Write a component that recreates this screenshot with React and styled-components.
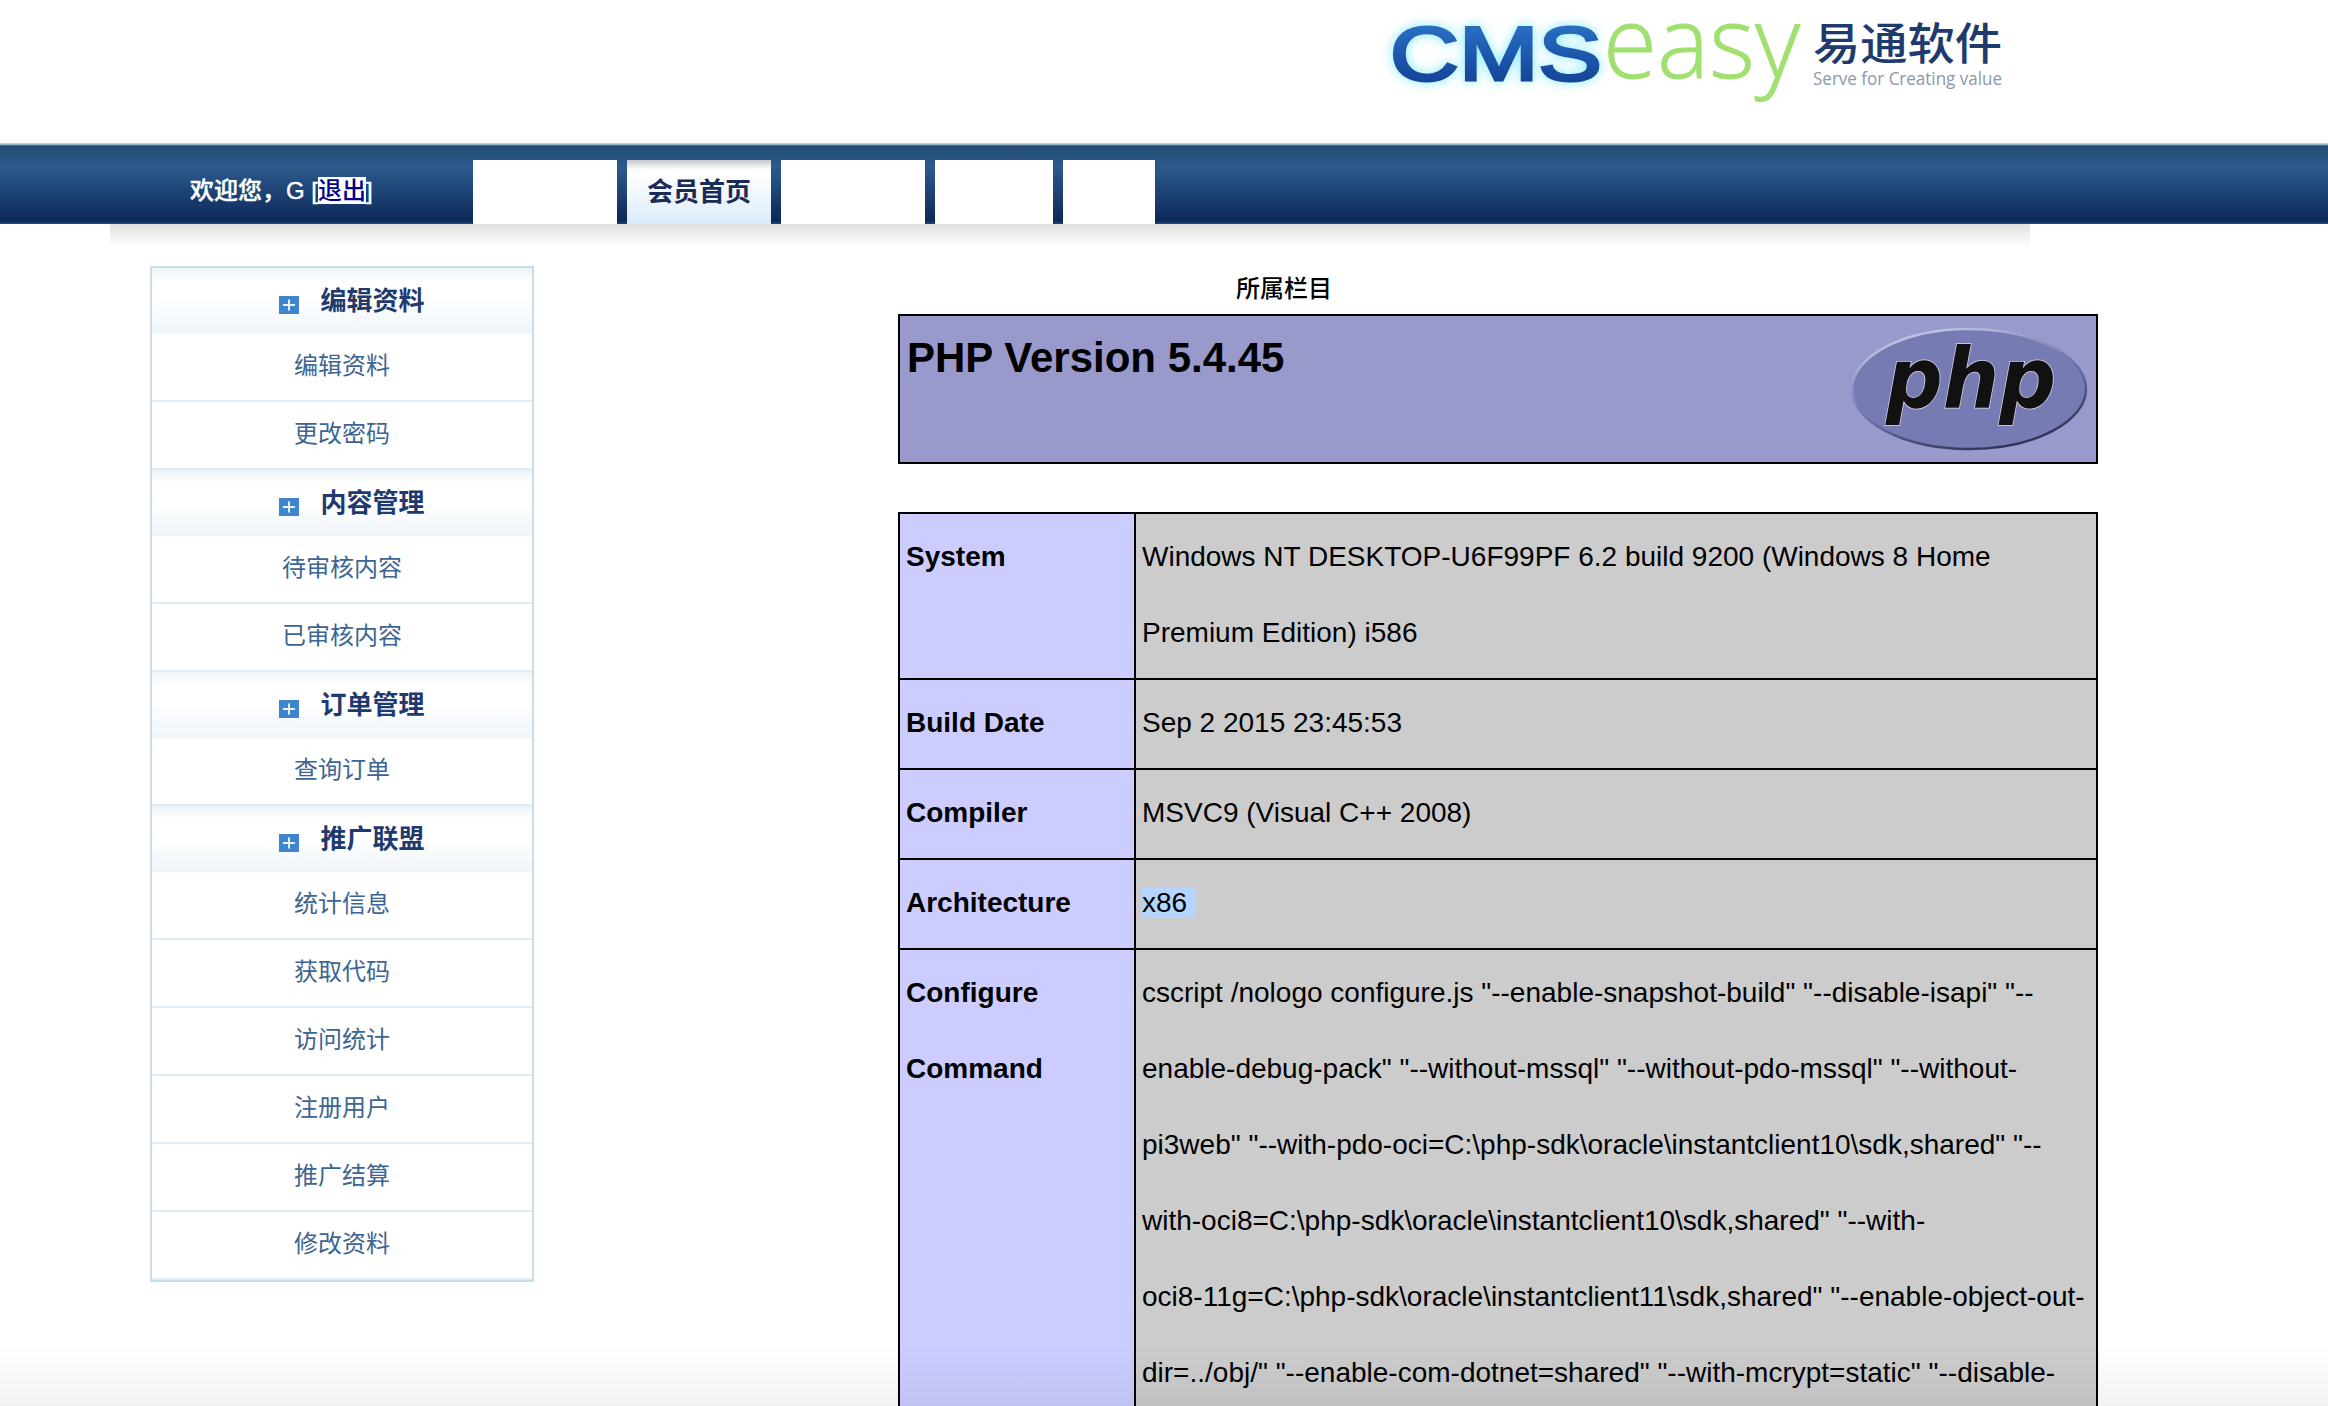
import React from "react";
import styled, { createGlobalStyle } from "styled-components";

const GlobalStyle = createGlobalStyle`
  html, body {
    margin: 0;
    padding: 0;
    height: 1406px;
    overflow: hidden;
    background: #fff;
  }
  * { box-sizing: border-box; }
`;

const Page = styled.div`
  position: relative;
  height: 1406px;
  overflow: hidden;
  font-family: "Liberation Sans", "Noto Sans CJK SC", sans-serif;
`;

const FadeOverlay = styled.div`
  position: absolute;
  left: 0;
  right: 0;
  bottom: 0;
  height: 62px;
  pointer-events: none;
  background: linear-gradient(rgba(0, 0, 0, 0), rgba(0, 0, 0, 0.05));
`;

const Header = styled.header`
  height: 143px;
  padding-left: 1380px;
`;

const Nav = styled.nav`
  display: flex;
  height: 81px;
  padding-left: 190px;
  background: linear-gradient(#b8d2e2 0, #b8d2e2 1px, #234b74 3px, #2c5a8c 24px, #0c2859 78px, #1c4c82 81px);
`;

const Welcome = styled.div`
  width: 283px;
  padding-top: 31px;
  font-size: 24px;
  line-height: 34px;
  font-weight: 500;
  color: #fff;
  white-space: nowrap;
  -webkit-text-stroke: 0.4px #fff;
`;

const Logout = styled.a`
  background: #fff;
  color: #00008b;
  -webkit-text-stroke: 0;
`;

const Tabs = styled.div`
  display: flex;
  align-items: flex-end;
  gap: 10px;
`;

const Tab = styled.div`
  display: flex;
  align-items: center;
  justify-content: center;
  width: ${(props) => props.w}px;
  height: 64px;
  padding-bottom: 6px;
  font-size: 26px;
  font-weight: 700;
  color: #1a2c55;
  background: ${(props) =>
    props.active ? "linear-gradient(#c9c9c9 0, #f8fbfe 9px, #ffffff 14px, #dbebfb 100%)" : "#fff"};
`;

const ShadowBand = styled.div`
  height: 23px;
  margin: 0 298px 0 110px;
  background: linear-gradient(#e0e0e0, #fff);
`;

const Main = styled.main`
  display: flex;
  align-items: flex-start;
  gap: 364px;
  padding: 19px 0 0 150px;
`;

const Sidebar = styled.aside`
  flex: none;
  width: 384px;
  border: 2px solid #c9dde8;
`;

const SectionHead = styled.div`
  display: flex;
  align-items: center;
  justify-content: center;
  gap: 21px;
  height: 66px;
  padding: 0 0 6px 20px;
  font-size: 26px;
  font-weight: 700;
  color: #1f3a6e;
  background: linear-gradient(#eef3f6 0, #ffffff 14px, #ffffff 30px, #eff5fb 100%);
`;

const PlusIcon = styled.svg`
  flex: none;
  width: 20px;
  height: 18px;
  margin-top: 14px;
`;

const Item = styled.div`
  height: 68px;
  line-height: 64px;
  text-align: center;
  font-size: 24px;
  color: #3d6593;
  border-bottom: 2px solid #e0ecf3;
`;

const Content = styled.div`
  flex: none;
  width: 1200px;
`;

const ColumnTitle = styled.div`
  height: 48px;
  padding-left: 338px;
  font-size: 24px;
  line-height: 46px;
  font-weight: 500;
  color: #000;
`;

const VersionBox = styled.div`
  display: flex;
  justify-content: space-between;
  height: 150px;
  margin-bottom: 48px;
  padding: 7px 8px 0 7px;
  border: 2px solid #000;
  background: #9999cc;
`;

const VersionTitle = styled.h1`
  margin: 0;
  font-size: 42px;
  line-height: 70px;
  font-weight: 700;
  color: #000;
`;

const PhpLogo = styled.svg`
  flex: none;
  width: 238px;
  height: 124px;
  margin-top: 4px;
`;

const InfoTable = styled.table`
  width: 1200px;
  table-layout: fixed;
  border-collapse: collapse;
  font-size: 28px;
  line-height: 76px;
  color: #000;
`;

const KeyCell = styled.td`
  width: 236px;
  padding: 5px 7px 7px 6px;
  vertical-align: top;
  font-weight: 700;
  border: 2px solid #000;
  background: #ccccff;
`;

const ValueCell = styled.td`
  padding: 5px 7px 7px 6px;
  vertical-align: top;
  border: 2px solid #000;
  background: #cccccc;
`;

const Selected = styled.span`
  padding-right: 8px;
  background: #b5d5ff;
`;

const NoBreak = styled.span`
  white-space: nowrap;
`;

const PlainLogo = styled.svg`
  display: block;
  width: 640px;
  height: 110px;
`;

const tabs = [
  { w: 144 },
  { w: 144, label: "会员首页", active: true },
  { w: 144 },
  { w: 118 },
  { w: 92 },
];

const menu = [
  { title: "编辑资料", items: ["编辑资料", "更改密码"] },
  { title: "内容管理", items: ["待审核内容", "已审核内容"] },
  { title: "订单管理", items: ["查询订单"] },
  { title: "推广联盟", items: ["统计信息", "获取代码", "访问统计", "注册用户", "推广结算", "修改资料"] },
];

const rows = [
  { key: "System", value: "Windows NT DESKTOP-U6F99PF 6.2 build 9200 (Windows 8 Home Premium Edition) i586" },
  { key: "Build Date", value: "Sep 2 2015 23:45:53" },
  { key: "Compiler", value: "MSVC9 (Visual C++ 2008)" },
  { key: "Architecture", value: <Selected>x86</Selected> },
  {
    key: "Configure Command",
    value: (
      <>
        {'cscript /nologo configure.js "--enable-snapshot-build" "--disable-isapi" "--enable-debug-pack" "--without-mssql" "--without-pdo-mssql" "--without-pi3web" "--with-pdo-oci=C:\\php-sdk\\oracle\\instantclient10\\sdk,shared" "--with-oci8=C:\\php-sdk\\oracle\\instantclient10\\sdk,shared" "--with-'}
        <NoBreak>{'oci8-11g=C:\\php-sdk\\oracle\\instantclient11\\sdk,shared"'}</NoBreak>
        {' "--enable-object-out-dir=../obj/" "--enable-com-dotnet=shared" "--with-mcrypt=static" "--disable-static-analyze"'}
      </>
    ),
  },
];

const CmsLogo = () => (
  <PlainLogo viewBox="0 0 640 110">
    <defs>
      <linearGradient id="cmsFill" x1="0" y1="0" x2="0" y2="1">
        <stop offset="0" stopColor="#2f7ccc" />
        <stop offset="0.55" stopColor="#1c55ab" />
        <stop offset="1" stopColor="#123a8e" />
      </linearGradient>
    </defs>
    <text
      x="10"
      y="80"
      fontFamily="Liberation Sans"
      fontSize="76"
      textLength="212"
      lengthAdjust="spacingAndGlyphs"
      fill="url(#cmsFill)"
      stroke="url(#cmsFill)"
      strokeWidth="3"
      style={{ filter: "drop-shadow(0 0 6px #7fe8f8)" }}
    >
      CMS
    </text>
    <text
      x="223"
      y="78"
      fontFamily="Open Sans"
      fontWeight="300"
      fontSize="100"
      textLength="197"
      lengthAdjust="spacingAndGlyphs"
      fill="#a0e070"
      stroke="#a0e070"
      strokeWidth="0.8"
    >
      easy
    </text>
    <text
      x="433"
      y="60"
      fontFamily="Noto Sans CJK SC"
      fontWeight="500"
      fontSize="44"
      textLength="189"
      lengthAdjust="spacingAndGlyphs"
      fill="#1f3a6c"
    >
      易通软件
    </text>
    <text
      x="433"
      y="85"
      fontFamily="Open Sans"
      fontSize="19"
      textLength="189"
      lengthAdjust="spacingAndGlyphs"
      fill="#8d97ab"
    >
      Serve for Creating value
    </text>
  </PlainLogo>
);

const PhpMark = () => (
  <PhpLogo viewBox="0 0 238 124">
    <defs>
      <linearGradient id="phpRim" x1="0.25" y1="0" x2="0.75" y2="1">
        <stop offset="0" stopColor="#c9cae6" />
        <stop offset="0.45" stopColor="#777bb4" />
        <stop offset="1" stopColor="#2a2a4c" />
      </linearGradient>
    </defs>
    <ellipse cx="119" cy="62" rx="117" ry="60" fill="#777bb4" stroke="url(#phpRim)" strokeWidth="2.5" />
    <text
      x="36"
      y="81"
      fontFamily="DejaVu Sans"
      fontWeight="700"
      fontStyle="italic"
      fontSize="84"
      textLength="170"
      lengthAdjust="spacingAndGlyphs"
      fill="#111"
      stroke="#d8d8e8"
      strokeWidth="1.5"
      paintOrder="stroke"
    >
      php
    </text>
  </PhpLogo>
);

const App = () => (
  <Page>
    <GlobalStyle />
    <Header>
      <CmsLogo />
    </Header>
    <Nav>
      <Welcome>
        欢迎您，G [<Logout>退出</Logout>]
      </Welcome>
      <Tabs>
        {tabs.map((tab, i) => (
          <Tab key={i} w={tab.w} active={tab.active}>
            {tab.label}
          </Tab>
        ))}
      </Tabs>
    </Nav>
    <ShadowBand />
    <Main>
      <Sidebar>
        {menu.map((section) => (
          <div key={section.title}>
            <SectionHead>
              <PlusIcon viewBox="0 0 20 18">
                <rect width="20" height="18" fill="#3f85cc" />
                <path d="M4 9h12M10 3.5v11" stroke="#e8f1fa" strokeWidth="2" />
              </PlusIcon>
              {section.title}
            </SectionHead>
            {section.items.map((item) => (
              <Item key={item}>{item}</Item>
            ))}
          </div>
        ))}
      </Sidebar>
      <Content>
        <ColumnTitle>所属栏目</ColumnTitle>
        <VersionBox>
          <VersionTitle>PHP Version 5.4.45</VersionTitle>
          <PhpMark />
        </VersionBox>
        <InfoTable>
          <tbody>
            {rows.map((row) => (
              <tr key={row.key}>
                <KeyCell>{row.key}</KeyCell>
                <ValueCell>{row.value}</ValueCell>
              </tr>
            ))}
          </tbody>
        </InfoTable>
      </Content>
    </Main>
    <FadeOverlay />
  </Page>
);

export default App;
